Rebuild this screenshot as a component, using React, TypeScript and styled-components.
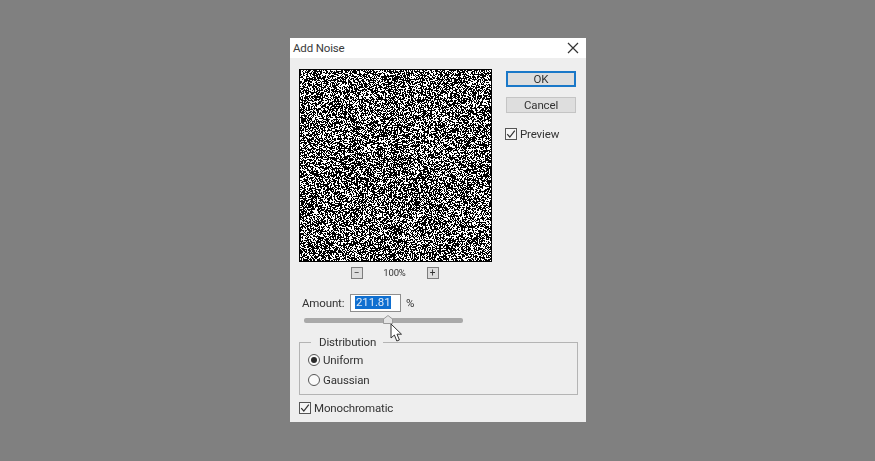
import React, { useEffect, useRef } from "react";
import styled, { createGlobalStyle } from "styled-components";

const GlobalStyle = createGlobalStyle`
  html, body {
    margin: 0;
    height: 100%;
    background: #808080;
  }
`;

const Page = styled.div`
  width: 875px;
  height: 461px;
  padding: 38px 0 0 290px;
  box-sizing: border-box;
  overflow: hidden;
  background: #808080;
`;

const Dialog = styled.div`
  position: relative;
  width: 296px;
  height: 384px;
  background: #eeeeee;
  font-family: Roboto, "Open Sans", sans-serif;
  font-size: 11.5px;
  letter-spacing: -0.15px;
  color: #333333;
  filter: blur(0.55px);
`;

const TitleBar = styled.div`
  height: 20px;
  padding: 0 7px 0 3px;
  display: flex;
  align-items: center;
  justify-content: space-between;
  background: #ffffff;
  color: #3a3a3a;
`;

const CloseIcon = styled.svg`
  width: 12px;
  height: 12px;
  stroke: #333333;
  stroke-width: 1.2;
`;

const Body = styled.div`
  padding: 11px 8px 0 9px;
`;

const TopRow = styled.div`
  display: flex;
`;

const PreviewColumn = styled.div`
  width: 193px;
`;

const NoiseCanvas = styled.canvas`
  display: block;
  width: 193px;
  height: 193px;
`;

const ZoomRow = styled.div`
  height: 13px;
  margin-top: 4px;
  display: flex;
  align-items: center;
  justify-content: center;
  gap: 18px;
  margin-left: -2px;
`;

const ZoomButton = styled.div`
  width: 10px;
  height: 10px;
  border: 1px solid #7d7d7d;
  background: #dddddd;
  display: flex;
  align-items: center;
  justify-content: center;
  font-size: 10px;
  line-height: 10px;
  color: #333333;
`;

const ZoomValue = styled.span`
  width: 28px;
  text-align: center;
  font-size: 9.5px;
`;

const SideColumn = styled.div`
  margin-left: 14px;
  width: 70px;
  padding-top: 2px;
  display: flex;
  flex-direction: column;
`;

const Button = styled.div<{ $primary?: boolean }>`
  width: 70px;
  height: 16px;
  box-sizing: border-box;
  display: flex;
  align-items: center;
  justify-content: center;
  background: #dedede;
  border: ${(p) => (p.$primary ? "2px solid #1a78c8" : "1px solid #c4c4c4")};
  margin-bottom: 10px;
`;

const CheckRow = styled.label<{ $top?: number; $left?: number }>`
  display: flex;
  align-items: center;
  gap: 3px;
  height: 13px;
  margin-top: ${(p) => p.$top ?? 0}px;
  margin-left: ${(p) => p.$left ?? 0}px;
`;

const CheckBox = styled.svg`
  width: 12px;
  height: 12px;
  flex: none;
`;

const AmountRow = styled.div`
  margin-top: 14px;
  margin-left: 3px;
  height: 19px;
  display: flex;
  align-items: center;
`;

const AmountLabel = styled.span`
  width: 48px;
`;

const AmountInput = styled.div`
  width: 51px;
  height: 18px;
  box-sizing: border-box;
  margin-right: 5px;
  padding-left: 4px;
  display: flex;
  align-items: center;
  background: #ffffff;
  border: 1px solid #8f8f8f;
`;

const Selected = styled.span`
  background: #0f6fd0;
  color: #dfeaf7;
  line-height: 13px;
  padding: 0 1px;
`;

const SliderTrack = styled.div`
  position: relative;
  width: 159px;
  height: 5px;
  margin: 6px 0 0 5px;
  background: #a9a9a9;
  border-radius: 2px;
`;

const SliderThumb = styled.svg`
  position: absolute;
  left: 79px;
  top: -3px;
  width: 10px;
  height: 9px;
`;

const Group = styled.fieldset`
  margin: 12px 0 0;
  padding: 0 0 0 8px;
  width: 279px;
  height: 60px;
  box-sizing: border-box;
  border: 1px solid #b4b4b4;
`;

const GroupTitle = styled.legend`
  margin-left: 3px;
  padding: 0 7px 0 8px;
  line-height: 14px;
`;

const RadioRow = styled.label`
  display: flex;
  align-items: center;
  gap: 3px;
  height: 14px;
  margin-bottom: 6px;
  &:first-of-type {
    margin-top: 4px;
  }
`;

const Radio = styled.span<{ $checked?: boolean }>`
  width: 12px;
  height: 12px;
  box-sizing: border-box;
  flex: none;
  border-radius: 50%;
  border: 1px solid #555555;
  background: #fafafa;
  display: flex;
  align-items: center;
  justify-content: center;
  &::after {
    content: "";
    width: 6px;
    height: 6px;
    border-radius: 50%;
    background: ${(p) => (p.$checked ? "#2a2a2a" : "transparent")};
  }
`;

const Cursor = styled.svg`
  position: absolute;
  left: 100px;
  top: 285px;
  width: 13px;
  height: 20px;
`;

const Check = () => (
  <CheckBox viewBox="0 0 12 12">
    <rect x="0.5" y="0.5" width="11" height="11" fill="#f6f6f6" stroke="#555555" />
    <path d="M2.2 6.2 L4.8 9 L9.8 2.6" fill="none" stroke="#333333" strokeWidth="1.2" />
  </CheckBox>
);

const Noise = () => {
  const ref = useRef<HTMLCanvasElement>(null);

  useEffect(() => {
    const ctx = ref.current?.getContext("2d");
    if (!ctx) return;
    // mulberry32, the simple LCG showed visible bands
    let seed = 20240611;
    const rand = () => {
      seed = (seed + 0x6d2b79f5) | 0;
      let t = Math.imul(seed ^ (seed >>> 15), 1 | seed);
      t = (t + Math.imul(t ^ (t >>> 7), 61 | t)) ^ t;
      return ((t ^ (t >>> 14)) >>> 0) / 4294967296;
    };
    const img = ctx.createImageData(193, 193);
    for (let y = 0; y < 193; y++) {
      for (let x = 0; x < 193; x++) {
        const edge = x === 0 || y === 0 || x === 192 || y === 192;
        const v = !edge && rand() < 0.42 ? 255 : 0;
        const i = (y * 193 + x) * 4;
        img.data[i] = v;
        img.data[i + 1] = v;
        img.data[i + 2] = v;
        img.data[i + 3] = 255;
      }
    }
    ctx.putImageData(img, 0, 0);
  }, []);

  return <NoiseCanvas ref={ref} width={193} height={193} />;
};

export default function App() {
  return (
    <Page>
      <GlobalStyle />
      <Dialog>
        <TitleBar>
          <span>Add Noise</span>
          <CloseIcon viewBox="0 0 12 12">
            <path d="M1 1 L11 11 M11 1 L1 11" />
          </CloseIcon>
        </TitleBar>
        <Body>
          <TopRow>
            <PreviewColumn>
              <Noise />
              <ZoomRow>
                <ZoomButton>−</ZoomButton>
                <ZoomValue>100%</ZoomValue>
                <ZoomButton>+</ZoomButton>
              </ZoomRow>
            </PreviewColumn>
            <SideColumn>
              <Button $primary>OK</Button>
              <Button>Cancel</Button>
              <CheckRow $top={4} $left={-1}>
                <Check />
                Preview
              </CheckRow>
            </SideColumn>
          </TopRow>
          <AmountRow>
            <AmountLabel>Amount:</AmountLabel>
            <AmountInput>
              <Selected>211.81</Selected>
            </AmountInput>
            %
          </AmountRow>
          <SliderTrack>
            <SliderThumb viewBox="0 0 10 9">
              <path d="M5 0.5 L9.5 4 V8.5 H0.5 V4 Z" fill="#e4e4e4" stroke="#9a9a9a" />
            </SliderThumb>
          </SliderTrack>
          <Group>
            <GroupTitle>Distribution</GroupTitle>
            <RadioRow>
              <Radio $checked />
              Uniform
            </RadioRow>
            <RadioRow>
              <Radio />
              Gaussian
            </RadioRow>
          </Group>
          <CheckRow $top={6}>
            <Check />
            Monochromatic
          </CheckRow>
        </Body>
        <Cursor viewBox="0 0 13 20">
          <path
            d="M1 1 V15 L4.4 12 L6.8 18 L9.4 17 L7 11.2 H11.5 Z"
            fill="#ffffff"
            stroke="#333333"
            strokeWidth="1"
          />
        </Cursor>
      </Dialog>
    </Page>
  );
}
